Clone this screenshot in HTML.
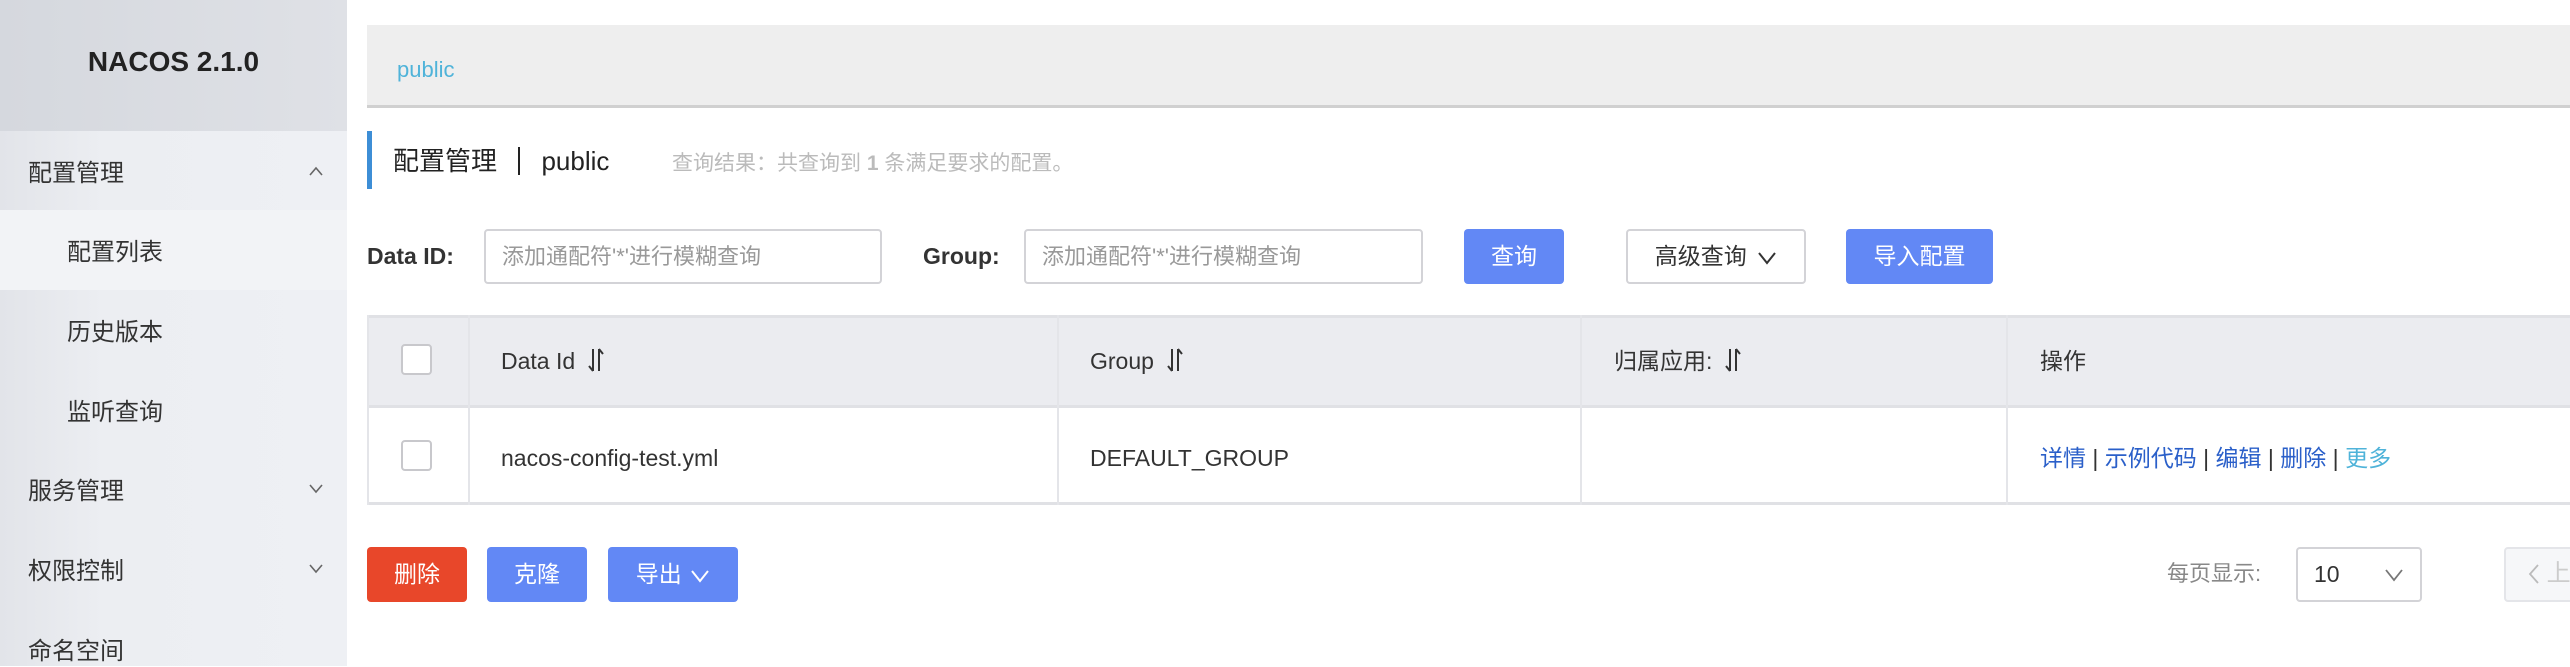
<!DOCTYPE html>
<html><head><meta charset="utf-8"><style>
*{box-sizing:border-box;margin:0;padding:0}
body{width:2570px;height:666px;overflow:hidden;background:#fff;font-family:"Liberation Sans","Noto Sans CJK SC",sans-serif;position:relative;color:#333}
.a{position:absolute;white-space:nowrap}
.side{left:0;top:0;width:347px;height:666px;background:linear-gradient(90deg,#e2e4e9,#eceef2 30%,#eef0f4)}
.logo{left:0;top:0;width:347px;height:131px;background:linear-gradient(90deg,#d5d8de,#dfe1e6);font-weight:bold;font-size:28px;color:#222;text-align:center;line-height:124px}
.mi{left:28px;font-size:24px;color:#333;line-height:30px}
.sub{left:67px;font-size:24px;color:#333;line-height:30px}
.ar{left:308px}
.inp{border:2px solid #d3d3d7;border-radius:4px;height:55px;font-size:22px;color:#999;padding-left:16px;line-height:51px;background:#fff}
.btn{height:55px;border-radius:4px;color:#fff;font-size:23px;text-align:center;line-height:55px;background:#6288f5}
.lbl{font-size:23px;font-weight:bold;color:#333;top:243px}
.th{font-size:23px;color:#333;top:346px;line-height:30px}
.vl{width:2px;background:#e4e5e9}
.lk{color:#2a5fc9}
.so{display:inline-block;vertical-align:-4px;margin-left:12px}
</style></head><body>
<div class="a side"></div>
<div class="a logo">NACOS 2.1.0</div>
<div class="a" style="left:0;top:210px;width:347px;height:80px;background:#f2f3f6"></div>
<div class="a mi" style="top:159px">配置管理</div>
<svg class="a ar" style="top:165px" width="16" height="12" viewBox="0 0 16 12"><path d="M2 10L8 3L14 10" fill="none" stroke="#666" stroke-width="1.6"/></svg>
<div class="a sub" style="top:238px">配置列表</div>
<div class="a sub" style="top:318px">历史版本</div>
<div class="a sub" style="top:398px">监听查询</div>
<div class="a mi" style="top:477px">服务管理</div>
<svg class="a ar" style="top:482px" width="16" height="12" viewBox="0 0 16 12"><path d="M2 3L8 10L14 3" fill="none" stroke="#666" stroke-width="1.6"/></svg>
<div class="a mi" style="top:557px">权限控制</div>
<svg class="a ar" style="top:562px" width="16" height="12" viewBox="0 0 16 12"><path d="M2 3L8 10L14 3" fill="none" stroke="#666" stroke-width="1.6"/></svg>
<div class="a mi" style="top:637px">命名空间</div>

<div class="a" style="left:367px;top:25px;width:2203px;height:83px;background:#eee;border-bottom:3px solid #d0d0d0"></div>
<div class="a" style="left:397px;top:57px;font-size:22px;color:#4fb3d9">public</div>
<div class="a" style="left:367px;top:131px;width:5px;height:58px;background:#3d8ed6"></div>
<div class="a" style="left:393px;top:145px;font-size:26px;color:#222;line-height:32px">配置管理 <span style="display:inline-block;width:2px;height:28px;background:#222;vertical-align:-5px;margin:0 14px"></span> public</div>
<div class="a" style="left:672px;top:150px;font-size:21px;color:#bbb;line-height:28px">查询结果：共查询到 <b>1</b> 条满足要求的配置。</div>

<div class="a lbl" style="left:367px">Data ID:</div>
<div class="a inp" style="left:484px;top:229px;width:398px">添加通配符'*'进行模糊查询</div>
<div class="a lbl" style="left:923px">Group:</div>
<div class="a inp" style="left:1024px;top:229px;width:399px">添加通配符'*'进行模糊查询</div>
<div class="a btn" style="left:1464px;top:229px;width:100px">查询</div>
<div class="a btn" style="left:1626px;top:229px;width:180px;background:#fff;border:2px solid #d3d3d7;color:#333;line-height:51px">高级查询 <svg width="20" height="14" viewBox="0 0 20 14" style="vertical-align:-1px;margin-left:4px"><path d="M2 2L10 12L18 2" fill="none" stroke="#333" stroke-width="2"/></svg></div>
<div class="a btn" style="left:1846px;top:229px;width:147px">导入配置</div>

<div class="a" style="left:367px;top:315px;width:2203px;height:93px;background:#ebecf0;border-top:3px solid #e0e1e5;border-bottom:3px solid #e0e1e5"></div>
<div class="a" style="left:367px;top:408px;width:2203px;height:97px;border-bottom:3px solid #e0e1e5"></div>
<div class="a vl" style="left:367px;top:315px;height:190px"></div>
<div class="a vl" style="left:468px;top:315px;height:190px"></div>
<div class="a vl" style="left:1057px;top:315px;height:190px"></div>
<div class="a vl" style="left:1580px;top:315px;height:190px"></div>
<div class="a vl" style="left:2006px;top:315px;height:190px"></div>
<div class="a" style="left:401px;top:344px;width:31px;height:31px;border:2px solid #c8c8cc;border-radius:4px;background:#fff"></div>
<div class="a" style="left:401px;top:440px;width:31px;height:31px;border:2px solid #c8c8cc;border-radius:4px;background:#fff"></div>
<div class="a th" style="left:501px">Data Id<svg class="so" width="18" height="26" viewBox="0 0 18 26"><path d="M6 2V24M6 24L2 19M12 24V2M12 2L16 7" fill="none" stroke="#333" stroke-width="2"/></svg></div>
<div class="a th" style="left:1090px">Group<svg class="so" width="18" height="26" viewBox="0 0 18 26"><path d="M6 2V24M6 24L2 19M12 24V2M12 2L16 7" fill="none" stroke="#333" stroke-width="2"/></svg></div>
<div class="a th" style="left:1614px">归属应用:<svg class="so" width="18" height="26" viewBox="0 0 18 26"><path d="M6 2V24M6 24L2 19M12 24V2M12 2L16 7" fill="none" stroke="#333" stroke-width="2"/></svg></div>
<div class="a th" style="left:2040px">操作</div>
<div class="a th" style="left:501px;top:443px">nacos-config-test.yml</div>
<div class="a th" style="left:1090px;top:443px">DEFAULT_GROUP</div>
<div class="a th" style="left:2040px;top:443px"><span class="lk">详情</span> | <span class="lk">示例代码</span> | <span class="lk">编辑</span> | <span class="lk">删除</span> | <span style="color:#4fb3d9">更多</span></div>

<div class="a btn" style="left:367px;top:547px;width:100px;background:#e8472a">删除</div>
<div class="a btn" style="left:487px;top:547px;width:100px">克隆</div>
<div class="a btn" style="left:608px;top:547px;width:130px">导出 <svg width="20" height="14" viewBox="0 0 20 14" style="vertical-align:-1px;margin-left:2px"><path d="M2 2L10 12L18 2" fill="none" stroke="#fff" stroke-width="2"/></svg></div>
<div class="a" style="left:2167px;top:560px;font-size:22px;color:#888;line-height:28px">每页显示:</div>
<div class="a inp" style="left:2296px;top:547px;width:126px;color:#333;font-size:23px">10 <svg width="20" height="14" viewBox="0 0 20 14" style="position:absolute;right:16px;top:19px"><path d="M2 2L10 12L18 2" fill="none" stroke="#777" stroke-width="1.8"/></svg></div>
<div class="a" style="left:2504px;top:547px;width:80px;height:55px;border:2px solid #e4e5e9;border-radius:4px;background:#f6f7f9;color:#ccc;font-size:24px;line-height:50px;padding-left:22px"><svg width="12" height="22" viewBox="0 0 12 22" style="vertical-align:-4px"><path d="M10 2L2 11L10 20" fill="none" stroke="#bbb" stroke-width="1.8"/></svg> 上</div>
</body></html>
